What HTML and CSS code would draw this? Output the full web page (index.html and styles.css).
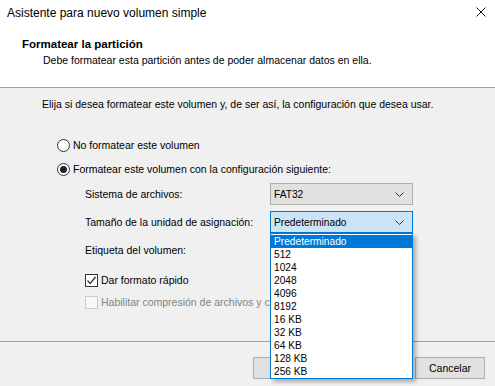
FILE: index.html
```html
<!DOCTYPE html>
<html lang="es">
<head>
    <meta charset="UTF-8">
    <meta name="viewport" content="width=device-width, initial-scale=1.0">
    <title>Asistente para nuevo volumen simple</title>
    <link rel="stylesheet" href="styles.css">
</head>
<body>
    <div class="dialog">
        <header class="header">
            <div class="titlebar">
                <span>Asistente para nuevo volumen simple</span>
                <svg class="close" width="10" height="10" viewBox="0 0 10 10">
                    <path d="M0.5 0.5 L9.5 9.5 M9.5 0.5 L0.5 9.5" stroke="#111" stroke-width="1" fill="none"/>
                </svg>
            </div>
            <div class="heading">
                <h1>Formatear la partición</h1>
                <p>Debe formatear esta partición antes de poder almacenar datos en ella.</p>
            </div>
        </header>

        <main class="content">
            <p class="intro">Elija si desea formatear este volumen y, de ser así, la configuración que desea usar.</p>

            <label class="radio first"><span class="radio-mark"></span>No formatear este volumen</label>
            <label class="radio checked"><span class="radio-mark"></span>Formatear este volumen con la configuración siguiente:</label>

            <div class="field">
                <span class="field-label">Sistema de archivos:</span>
                <div class="combo">
                    <span>FAT32</span>
                    <svg class="chevron" width="9" height="5" viewBox="0 0 9 5"><path d="M0.5 0.5 L4.5 4.5 L8.5 0.5" stroke="#333" fill="none"/></svg>
                </div>
            </div>
            <div class="field">
                <span class="field-label">Tamaño de la unidad de asignación:</span>
                <div class="combo focused">
                    <span>Predeterminado</span>
                    <svg class="chevron" width="9" height="5" viewBox="0 0 9 5"><path d="M0.5 0.5 L4.5 4.5 L8.5 0.5" stroke="#333" fill="none"/></svg>
                    <ul class="dropdown">
                        <li class="selected">Predeterminado</li>
                        <li>512</li>
                        <li>1024</li>
                        <li>2048</li>
                        <li>4096</li>
                        <li>8192</li>
                        <li>16 KB</li>
                        <li>32 KB</li>
                        <li>64 KB</li>
                        <li>128 KB</li>
                        <li>256 KB</li>
                    </ul>
                </div>
            </div>
            <div class="field">
                <span class="field-label">Etiqueta del volumen:</span>
                <div class="textbox"></div>
            </div>

            <label class="check first checked">
                <span class="check-mark">
                    <svg width="11" height="11" viewBox="0 0 11 11"><path d="M1.5 5.5 L4.2 8.3 L9.5 2" stroke="#222" stroke-width="1.2" fill="none"/></svg>
                </span>Dar formato rápido
            </label>
            <label class="check disabled"><span class="check-mark"></span>Habilitar compresión de archivos y carpetas</label>
        </main>

        <footer class="footer">
            <button class="btn back">&lt; Atrás</button>
            <button class="btn next">Siguiente &gt;</button>
            <button class="btn cancel">Cancelar</button>
        </footer>
    </div>
</body>
</html>
```

FILE: styles.css
```css
body {
    margin: 0;
    padding: 0;
    background: #f0f0f0;
    font-family: "Liberation Sans", Arial, sans-serif;
    font-size: 10.5px;
    color: #000;
}
.dialog {
    width: 495px;
    height: 386px;
    display: flex;
    flex-direction: column;
    background: #f0f0f0;
    overflow: hidden;
}
.header {
    height: 87px;
    background: #fff;
    border-bottom: 1px solid #a0a0a0;
}
.titlebar {
    height: 26px;
    display: flex;
    align-items: center;
    justify-content: space-between;
    padding: 0 9px 0 7px;
    font-size: 12px;
    color: #000;
}
.close {
    margin-top: -2px;
}
.heading {
    margin-top: 10px;
    line-height: 16px;
}
.heading h1 {
    margin: 0;
    padding-left: 22px;
    font-size: 11.5px;
    font-weight: bold;
}
.heading p {
    margin: 0;
    padding-left: 43px;
}
.content {
    height: 253px;
    padding-top: 8px;
    box-sizing: border-box;
}
.intro {
    margin: 0;
    padding-left: 42px;
    line-height: 16px;
}
.radio {
    display: flex;
    align-items: center;
    height: 16px;
    margin: 8px 0 0 57px;
}
.radio.first {
    margin-top: 25px;
}
.radio-mark {
    width: 11px;
    height: 11px;
    border: 1px solid #333;
    border-radius: 50%;
    background: #fff;
    margin-right: 3px;
    display: flex;
    align-items: center;
    justify-content: center;
}
.radio.checked .radio-mark::after {
    content: "";
    width: 7px;
    height: 7px;
    border-radius: 50%;
    background: #222;
}
.field {
    display: flex;
    align-items: center;
    height: 22px;
    margin: 6px 0 0 85px;
}
.field-label {
    width: 185px;
}
.combo {
    position: relative;
    width: 143px;
    height: 22px;
    box-sizing: border-box;
    border: 1px solid #adadad;
    background: #e1e1e1;
    display: flex;
    align-items: center;
    justify-content: space-between;
    padding: 0 8px 0 3px;
    font-size: 10.2px;
}
.combo.focused {
    border-color: #0078d7;
    background: #cce4f7;
}
.textbox {
    width: 143px;
    height: 22px;
    box-sizing: border-box;
    border: 1px solid #7a7a7a;
    background: #fff;
}
.dropdown {
    position: absolute;
    left: -1px;
    top: 21px;
    width: 143px;
    box-sizing: border-box;
    margin: 0;
    padding: 1px 0 0;
    list-style: none;
    background: #fff;
    border: 1px solid #0078d7;
    box-shadow: 3px 3px 4px rgba(0, 0, 0, 0.28);
    font-size: 10.2px;
    z-index: 10;
}
.dropdown li {
    height: 13px;
    line-height: 13px;
    padding-left: 3px;
}
.dropdown li.selected {
    background: #0078d7;
    color: #fff;
}
.check {
    display: flex;
    align-items: center;
    height: 16px;
    margin: 6px 0 0 85px;
}
.check.first {
    margin-top: 11px;
}
.check-mark {
    width: 11px;
    height: 11px;
    border: 1px solid #333;
    background: #fff;
    margin-right: 3px;
    display: flex;
}
.check.disabled {
    color: #838383;
}
.check.disabled .check-mark {
    border-color: #cccccc;
    background: #f7f7f7;
}
.footer {
    flex: 1;
    border-top: 1px solid #a0a0a0;
    display: flex;
    align-items: flex-start;
    padding: 15px 10px 0 253px;
}
.btn {
    height: 22px;
    box-sizing: border-box;
    border: 1px solid #adadad;
    background: #e1e1e1;
    font-family: inherit;
    font-size: 10.5px;
    color: #000;
    padding: 0;
}
.back,
.next {
    width: 75px;
}
.cancel {
    width: 70px;
    margin-left: 12px;
}
```
